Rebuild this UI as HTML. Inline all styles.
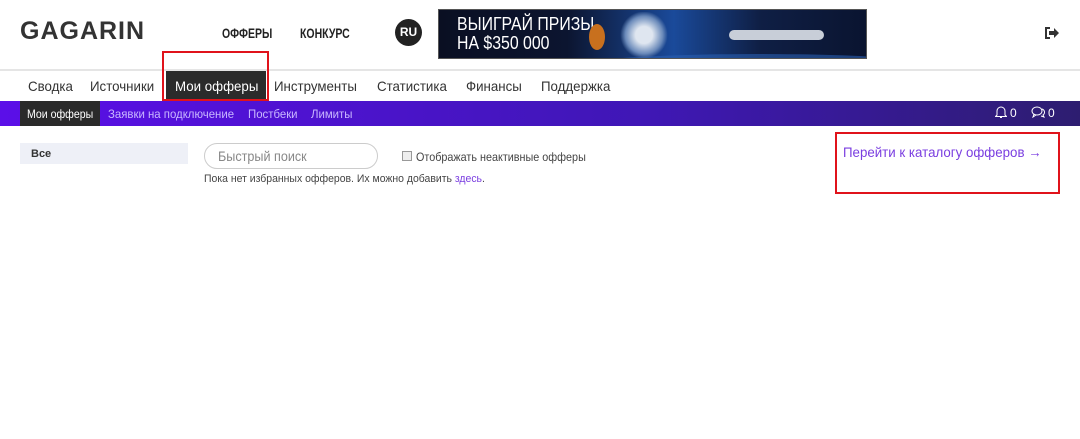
<!DOCTYPE html>
<html><head><meta charset="utf-8"><style>
*{margin:0;padding:0;box-sizing:border-box}
body{width:1080px;height:439px;background:#fff;font-family:"Liberation Sans",sans-serif;position:relative;overflow:hidden;color:#333}
.a{position:absolute;white-space:nowrap}
.c{transform:scaleX(.9);transform-origin:left}
.logo{left:20px;top:17px;font-size:25px;font-weight:bold;color:#333;letter-spacing:1px}
.top{top:25px;font-size:14px;font-weight:bold;color:#222;transform:scaleX(.75);transform-origin:left}
.ru{left:395px;top:19px;width:27px;height:27px;border-radius:50%;background:#222;color:#fff;font-size:12px;font-weight:bold;text-align:center;line-height:27px}
.ban{left:438px;top:9px;width:429px;height:50px;background:linear-gradient(90deg,#0a0f22 0%,#0c1530 30%,#1a4a9a 55%,#0f1f45 75%,#0a1430 100%);border:1px solid #555;overflow:hidden}
.ban div{position:absolute}
.bt{left:18px;top:5px;color:#fff;font-size:18px;line-height:19px;transform:scaleX(.88);transform-origin:left}
.line{left:0;top:69px;width:1080px;height:2px;background:#e5e5e5}
.nav{top:78px;font-size:14px;color:#333;transform:scaleX(.95);transform-origin:left}
.act{left:166px;top:71px;width:100px;height:30px;background:#2b2b2b}
.bar{left:0;top:101px;width:1080px;height:25px;background:linear-gradient(90deg,#5b0fe8,#3f17b5 60%,#2d1d70)}
.sub{top:107px;font-size:12px;color:#c9b7ff;transform:scaleX(.95);transform-origin:left}
.sact{left:20px;top:101px;width:80px;height:25px;background:#2a2a2a}
.red{border:2px solid #e0131b}
</style></head><body>
<div class="a logo">GAGARIN</div>
<div class="a top" style="left:222px">ОФФЕРЫ</div>
<div class="a top" style="left:300px">КОНКУРС</div>
<div class="a ru">RU</div>
<div class="a ban"><div class="bt">ВЫИГРАЙ ПРИЗЫ<br>НА $350 000</div>
<div style="top:44px;width:400px;height:30px;border-radius:50%;background:#2a5fb0;opacity:.6;left:120px"></div>
<div style="left:150px;top:14px;width:16px;height:26px;border-radius:50%;background:#c8701e"></div>
<div style="left:180px;top:2px;width:50px;height:46px;background:radial-gradient(circle,#dfe6f0 25%,#6a8aba 55%,transparent 70%)"></div>
<div style="left:290px;top:20px;width:95px;height:10px;background:#c8ced8;border-radius:5px"></div></div>
<svg class="a" style="left:1045px;top:27px" width="14" height="12" viewBox="0 0 14 12"><path d="M5 1H1v10h4" stroke="#333" stroke-width="2" fill="none"/><path d="M4 4h5V1l5 5-5 5V8H4z" fill="#333"/></svg>
<div class="a line"></div>
<div class="a nav" style="left:28px">Сводка</div>
<div class="a nav" style="left:90px">Источники</div>
<div class="a act"></div>
<div class="a nav" style="left:175px;color:#fff">Мои офферы</div>
<div class="a nav" style="left:274px">Инструменты</div>
<div class="a nav" style="left:377px">Статистика</div>
<div class="a nav" style="left:466px">Финансы</div>
<div class="a nav" style="left:541px">Поддержка</div>
<div class="a bar"></div>
<div class="a sact"></div>
<div class="a sub" style="left:27px;color:#fff;transform:scaleX(.88)">Мои офферы</div>
<div class="a sub" style="left:108px">Заявки на подключение</div>
<div class="a sub" style="left:248px">Постбеки</div>
<div class="a sub" style="left:311px">Лимиты</div>
<svg class="a" style="left:995px;top:106px" width="12" height="13" viewBox="0 0 12 13"><path d="M2 9V5a4 4 0 0 1 8 0v4l1.5 1.5h-11z M5 11.5h2" stroke="#fff" fill="none"/></svg>
<div class="a" style="left:1010px;top:106px;color:#fff;font-size:12px">0</div>
<svg class="a" style="left:1031px;top:106px" width="15" height="12" viewBox="0 0 15 12"><ellipse cx="6" cy="5" rx="5" ry="4" stroke="#fff" fill="none"/><path d="M3 8l-1 3 3-2" stroke="#fff" fill="none"/><path d="M11 3a4 3.5 0 0 1 1 6l1 2-3-1" stroke="#fff" fill="none"/></svg>
<div class="a" style="left:1048px;top:106px;color:#fff;font-size:12px">0</div>
<div class="a" style="left:20px;top:143px;width:168px;height:21px;background:#eef0f7"></div>
<div class="a" style="left:31px;top:148px;font-size:11px;font-weight:bold;color:#333">Все</div>
<div class="a" style="left:204px;top:143px;width:174px;height:26px;border:1px solid #ccc;border-radius:13px"></div>
<div class="a c" style="left:218px;top:148px;font-size:14px;color:#888">Быстрый поиск</div>
<div class="a" style="left:402px;top:151px;width:10px;height:10px;border:1px solid #999;background:#eee"></div>
<div class="a" style="left:416px;top:150px;font-size:12px;color:#444;transform:scaleX(.9);transform-origin:left">Отображать неактивные офферы</div>
<div class="a" style="left:204px;top:173px;font-size:11px;color:#444;transform:scaleX(.95);transform-origin:left">Пока нет избранных офферов. Их можно добавить <span style="color:#7a3ee0">здесь</span>.</div>
<div class="a" style="left:843px;top:144px;font-size:14px;color:#7a3ee0;transform:scaleX(.95);transform-origin:left">Перейти к каталогу офферов →</div>
<div class="a red" style="left:162px;top:51px;width:107px;height:50px"></div>
<div class="a red" style="left:835px;top:132px;width:225px;height:62px"></div>
</body></html>
